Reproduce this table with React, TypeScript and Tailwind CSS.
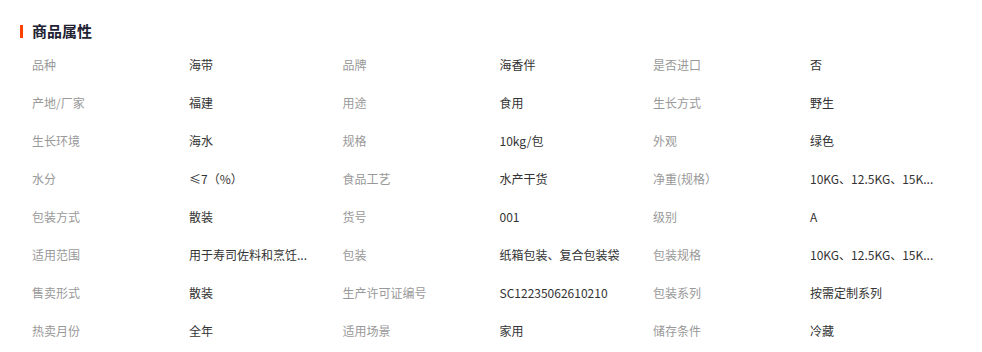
import React from "react";

const rows: [string, string][] = [
  ["品种", "海带"], ["品牌", "海香伴"], ["是否进口", "否"],
  ["产地/厂家", "福建"], ["用途", "食用"], ["生长方式", "野生"],
  ["生长环境", "海水"], ["规格", "10kg/包"], ["外观", "绿色"],
  ["水分", "≤7（%）"], ["食品工艺", "水产干货"], ["净重(规格）", "10KG、12.5KG、15K..."],
  ["包装方式", "散装"], ["货号", "001"], ["级别", "A"],
  ["适用范围", "用于寿司佐料和烹饪..."], ["包装", "纸箱包装、复合包装袋"], ["包装规格", "10KG、12.5KG、15K..."],
  ["售卖形式", "散装"], ["生产许可证编号", "SC12235062610210"], ["包装系列", "按需定制系列"],
  ["热卖月份", "全年"], ["适用场景", "家用"], ["储存条件", "冷藏"],
];

export default function App() {
  return (
    <div
      className="w-[982px] h-[352px] bg-white overflow-hidden"
      style={{ fontFamily: '"Noto Sans CJK SC", "Noto Sans", sans-serif' }}
    >
      <div className="pt-[22px] pl-[20px] flex items-center h-[40px]">
        <div className="w-[3px] h-[13px] bg-[#ff4200]" />
        <div className="ml-[9px] text-[15px] font-bold text-[#222233] leading-[18px]">商品属性</div>
      </div>
      <div className="pl-[32px] pt-[6px] grid grid-cols-[157px_153.5px_157px_153.5px_157px_153.5px]">
        {rows.map(([k, v], i) => (
          <React.Fragment key={i}>
            <div className="h-[38px] flex items-center text-[12px] text-[#999999] whitespace-nowrap">{k}</div>
            <div className="h-[38px] flex items-center text-[12px] text-[#333333] whitespace-nowrap">{v}</div>
          </React.Fragment>
        ))}
      </div>
    </div>
  );
}
